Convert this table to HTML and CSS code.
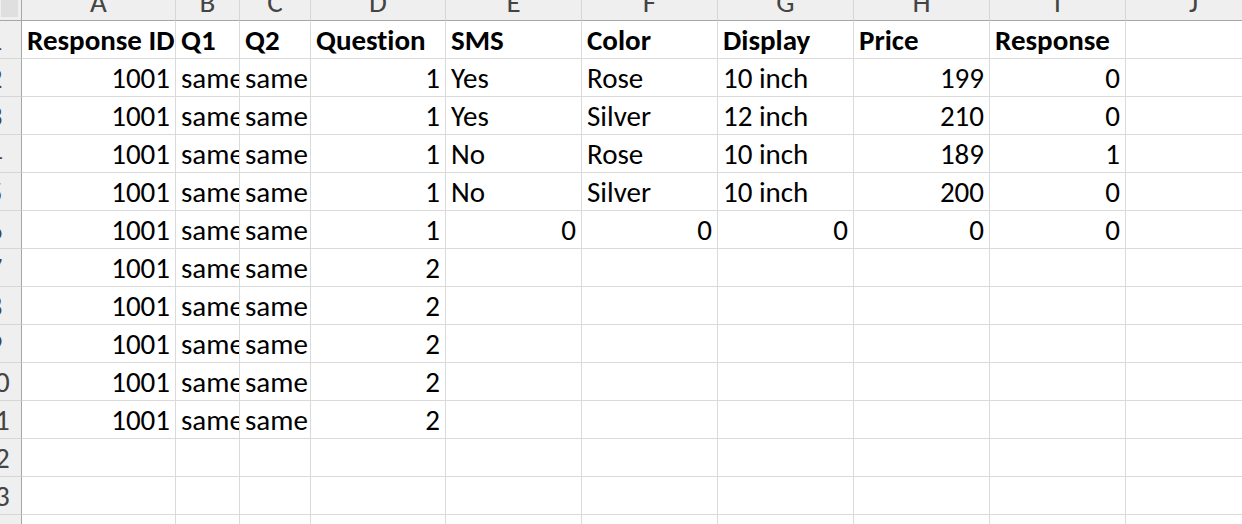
FILE: index.html
```html
<!DOCTYPE html>
<html>
<head>
<meta charset="utf-8">
<link rel="stylesheet" href="styles.css">
</head>
<body>
<div class="sheet">
  <div class="corner"><div class="corner-mark"></div></div>
  <div class="colhead"><span>A</span></div>
  <div class="colhead"><span>B</span></div>
  <div class="colhead"><span>C</span></div>
  <div class="colhead"><span>D</span></div>
  <div class="colhead"><span>E</span></div>
  <div class="colhead"><span>F</span></div>
  <div class="colhead"><span>G</span></div>
  <div class="colhead"><span>H</span></div>
  <div class="colhead"><span>I</span></div>
  <div class="colhead"><span>J</span></div>

  <div class="rowhead">1</div>
  <div class="cell bold">Response ID</div>
  <div class="cell bold">Q1</div>
  <div class="cell bold">Q2</div>
  <div class="cell bold">Question</div>
  <div class="cell bold">SMS</div>
  <div class="cell bold">Color</div>
  <div class="cell bold">Display</div>
  <div class="cell bold">Price</div>
  <div class="cell bold">Response</div>
  <div class="cell"></div>

  <div class="rowhead">2</div>
  <div class="cell num">1001</div>
  <div class="cell">same</div>
  <div class="cell">same</div>
  <div class="cell num">1</div>
  <div class="cell">Yes</div>
  <div class="cell">Rose</div>
  <div class="cell">10 inch</div>
  <div class="cell num">199</div>
  <div class="cell num">0</div>
  <div class="cell"></div>

  <div class="rowhead">3</div>
  <div class="cell num">1001</div>
  <div class="cell">same</div>
  <div class="cell">same</div>
  <div class="cell num">1</div>
  <div class="cell">Yes</div>
  <div class="cell">Silver</div>
  <div class="cell">12 inch</div>
  <div class="cell num">210</div>
  <div class="cell num">0</div>
  <div class="cell"></div>

  <div class="rowhead">4</div>
  <div class="cell num">1001</div>
  <div class="cell">same</div>
  <div class="cell">same</div>
  <div class="cell num">1</div>
  <div class="cell">No</div>
  <div class="cell">Rose</div>
  <div class="cell">10 inch</div>
  <div class="cell num">189</div>
  <div class="cell num">1</div>
  <div class="cell"></div>

  <div class="rowhead">5</div>
  <div class="cell num">1001</div>
  <div class="cell">same</div>
  <div class="cell">same</div>
  <div class="cell num">1</div>
  <div class="cell">No</div>
  <div class="cell">Silver</div>
  <div class="cell">10 inch</div>
  <div class="cell num">200</div>
  <div class="cell num">0</div>
  <div class="cell"></div>

  <div class="rowhead">6</div>
  <div class="cell num">1001</div>
  <div class="cell">same</div>
  <div class="cell">same</div>
  <div class="cell num">1</div>
  <div class="cell num">0</div>
  <div class="cell num">0</div>
  <div class="cell num">0</div>
  <div class="cell num">0</div>
  <div class="cell num">0</div>
  <div class="cell"></div>

  <div class="rowhead">7</div>
  <div class="cell num">1001</div>
  <div class="cell">same</div>
  <div class="cell">same</div>
  <div class="cell num">2</div>
  <div class="cell"></div><div class="cell"></div><div class="cell"></div><div class="cell"></div><div class="cell"></div><div class="cell"></div>

  <div class="rowhead">8</div>
  <div class="cell num">1001</div>
  <div class="cell">same</div>
  <div class="cell">same</div>
  <div class="cell num">2</div>
  <div class="cell"></div><div class="cell"></div><div class="cell"></div><div class="cell"></div><div class="cell"></div><div class="cell"></div>

  <div class="rowhead">9</div>
  <div class="cell num">1001</div>
  <div class="cell">same</div>
  <div class="cell">same</div>
  <div class="cell num">2</div>
  <div class="cell"></div><div class="cell"></div><div class="cell"></div><div class="cell"></div><div class="cell"></div><div class="cell"></div>

  <div class="rowhead">10</div>
  <div class="cell num">1001</div>
  <div class="cell">same</div>
  <div class="cell">same</div>
  <div class="cell num">2</div>
  <div class="cell"></div><div class="cell"></div><div class="cell"></div><div class="cell"></div><div class="cell"></div><div class="cell"></div>

  <div class="rowhead">11</div>
  <div class="cell num">1001</div>
  <div class="cell">same</div>
  <div class="cell">same</div>
  <div class="cell num">2</div>
  <div class="cell"></div><div class="cell"></div><div class="cell"></div><div class="cell"></div><div class="cell"></div><div class="cell"></div>

  <div class="rowhead">12</div>
  <div class="cell"></div><div class="cell"></div><div class="cell"></div><div class="cell"></div><div class="cell"></div>
  <div class="cell"></div><div class="cell"></div><div class="cell"></div><div class="cell"></div><div class="cell"></div>

  <div class="rowhead">13</div>
  <div class="cell"></div><div class="cell"></div><div class="cell"></div><div class="cell"></div><div class="cell"></div>
  <div class="cell"></div><div class="cell"></div><div class="cell"></div><div class="cell"></div><div class="cell"></div>

  <div class="rowhead">14</div>
  <div class="cell"></div><div class="cell"></div><div class="cell"></div><div class="cell"></div><div class="cell"></div>
  <div class="cell"></div><div class="cell"></div><div class="cell"></div><div class="cell"></div><div class="cell"></div>
</div>
</body>
</html>
```

FILE: styles.css
```css
html, body {
  margin: 0;
  padding: 0;
  background: #ffffff;
  overflow: hidden;
  width: 1242px;
  height: 524px;
}

.sheet {
  display: grid;
  grid-template-columns: 53px 154px 64px 71px 135px 136px 136px 136px 136px 136px 136px;
  grid-template-rows: 21px repeat(14, 38px);
  margin-left: -31px;
  font-family: Carlito, Lato, "Open Sans", sans-serif;
  font-size: 29px;
  font-variant-ligatures: none;
  color: #000000;
}

.sheet > div {
  box-sizing: border-box;
  white-space: nowrap;
  overflow: hidden;
}

.corner {
  background: #efefef;
  border-right: 1px solid #a6a6a6;
  border-bottom: 1px solid #a6a6a6;
  display: flex;
  justify-content: flex-end;
  align-items: flex-end;
  padding: 0 3px 3px 0;
}

.corner-mark {
  width: 17px;
  height: 17px;
  background: #dfdfdf;
}

.colhead {
  background: #efefef;
  border-right: 1px solid #d6d6d6;
  border-bottom: 1px solid #a6a6a6;
  color: #444444;
  text-align: center;
  overflow: visible !important;
}

.colhead span {
  display: block;
  line-height: 21px;
  margin-top: -8px;
}

.rowhead {
  background: #efefef;
  border-right: 1px solid #a6a6a6;
  border-bottom: 1px solid #d6d6d6;
  color: #444444;
  text-align: center;
  padding-top: 1px;
  line-height: 36px;
}

.cell {
  border-right: 1px solid #dadada;
  border-bottom: 1px solid #dadada;
  padding: 1px 5px 0;
  line-height: 37px;
  text-align: left;
}

.cell.num {
  text-align: right;
}

.cell.bold {
  font-weight: 700;
}
```
